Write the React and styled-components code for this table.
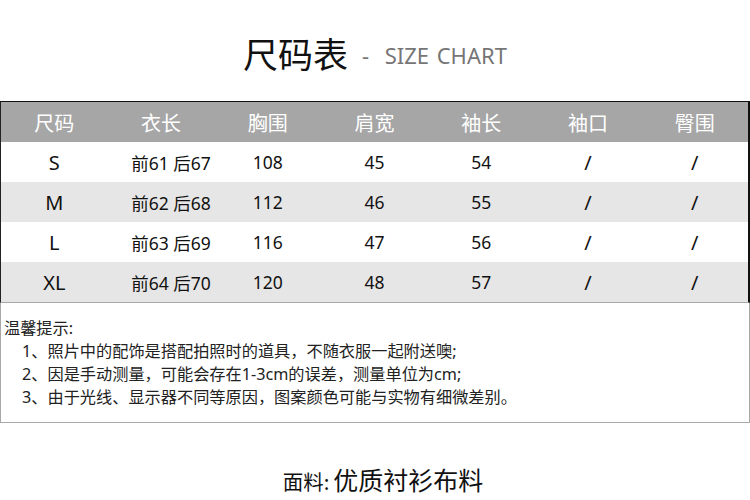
import React from "react"
import styled, { createGlobalStyle } from "styled-components"

const GlobalStyle = createGlobalStyle`
    body {
        margin: 0;
        background: #ffffff;
        font-family: "Noto Sans", "Noto Sans CJK SC", sans-serif;
        color: #111111;
    }
`

const columns = ["尺码", "衣长", "胸围", "肩宽", "袖长", "袖口", "臀围"]

const rows = [
    ["S", "前61 后67", "108", "45", "54", "/", "/"],
    ["M", "前62 后68", "112", "46", "55", "/", "/"],
    ["L", "前63 后69", "116", "47", "56", "/", "/"],
    ["XL", "前64 后70", "120", "48", "57", "/", "/"]
]

const notes = [
    "1、照片中的配饰是搭配拍照时的道具，不随衣服一起附送噢;",
    "2、因是手动测量，可能会存在1-3cm的误差，测量单位为cm;",
    "3、由于光线、显示器不同等原因，图案颜色可能与实物有细微差别。"
]

const Page = styled.div`
    width: 750px;
    height: 500px;
    overflow: hidden;
`

const Heading = styled.div`
    height: 101px;
    box-sizing: border-box;
    padding-top: 4px;
    display: flex;
    align-items: center;
    justify-content: center;
    gap: 14px;
`

const HeadingMain = styled.span`
    font-family: "Noto Sans CJK SC", sans-serif;
    font-size: 35px;
    line-height: 40px;
    color: #111111;
`

const HeadingSub = styled.span`
    font-family: "Noto Sans", "Open Sans", sans-serif;
    font-size: 22px;
    line-height: 40px;
    color: #767676;
    padding-top: 4px;
    word-spacing: 2px;
`

const Table = styled.div`
    border-top: 1px solid #111111;
    border-left: 1px solid #222222;
    border-right: 2px solid #111111;
    border-bottom: 1px solid #a8a8a8;
`

const Row = styled.div`
    display: grid;
    grid-template-columns: repeat(7, 1fr);
    height: 40px;
    background: ${p => (p.$head ? "#a6a6a6" : p.$alt ? "#e7e6e6" : "#ffffff")};
`

const HeadCell = styled.div`
    display: flex;
    align-items: center;
    justify-content: center;
    font-family: "Noto Sans CJK SC", sans-serif;
    font-size: 20px;
    color: #ffffff;
`

const Cell = styled.div`
    display: flex;
    align-items: center;
    justify-content: center;
    padding-left: ${p => (p.$shift ? "20px" : "0")};
    font-size: ${p => (p.$big ? "20px" : "17.5px")};
    color: #111111;
    font-family: "Noto Sans", "Noto Sans CJK SC", sans-serif;
`

const Notes = styled.div`
    border-left: 1px solid #a8a8a8;
    border-right: 1px solid #a8a8a8;
    border-bottom: 1px solid #a8a8a8;
    padding: 14px 0 13px 3px;
    font-size: 16.2px;
    line-height: 23px;
    color: #222222;
`

const NoteItem = styled.div`
    padding-left: 18px;
`

const Footer = styled.div`
    margin-top: 40px;
    display: flex;
    align-items: baseline;
    justify-content: center;
    padding-left: 16px;
    line-height: 32px;
    font-family: "Noto Sans CJK SC", sans-serif;
    color: #111111;
`

const FooterLabel = styled.span`
    font-size: 20.5px;
`

const FooterValue = styled.span`
    font-size: 25px;
    margin-left: 4px;
`

const App = () => (
    <Page>
        <GlobalStyle />
        <Heading>
            <HeadingMain>尺码表</HeadingMain>
            <HeadingSub>- &nbsp;SIZE CHART</HeadingSub>
        </Heading>
        <Table>
            <Row $head>
                {columns.map(c => (
                    <HeadCell key={c}>{c}</HeadCell>
                ))}
            </Row>
            {rows.map((r, i) => (
                <Row key={r[0]} $alt={i % 2 === 1}>
                    {r.map((v, j) => (
                        <Cell key={j} $big={j === 0 || j > 4} $shift={j === 1}>
                            {v}
                        </Cell>
                    ))}
                </Row>
            ))}
        </Table>
        <Notes>
            <div>温馨提示:</div>
            {notes.map(n => (
                <NoteItem key={n}>{n}</NoteItem>
            ))}
        </Notes>
        <Footer>
            <FooterLabel>面料:</FooterLabel>
            <FooterValue>优质衬衫布料</FooterValue>
        </Footer>
    </Page>
)

export default App
